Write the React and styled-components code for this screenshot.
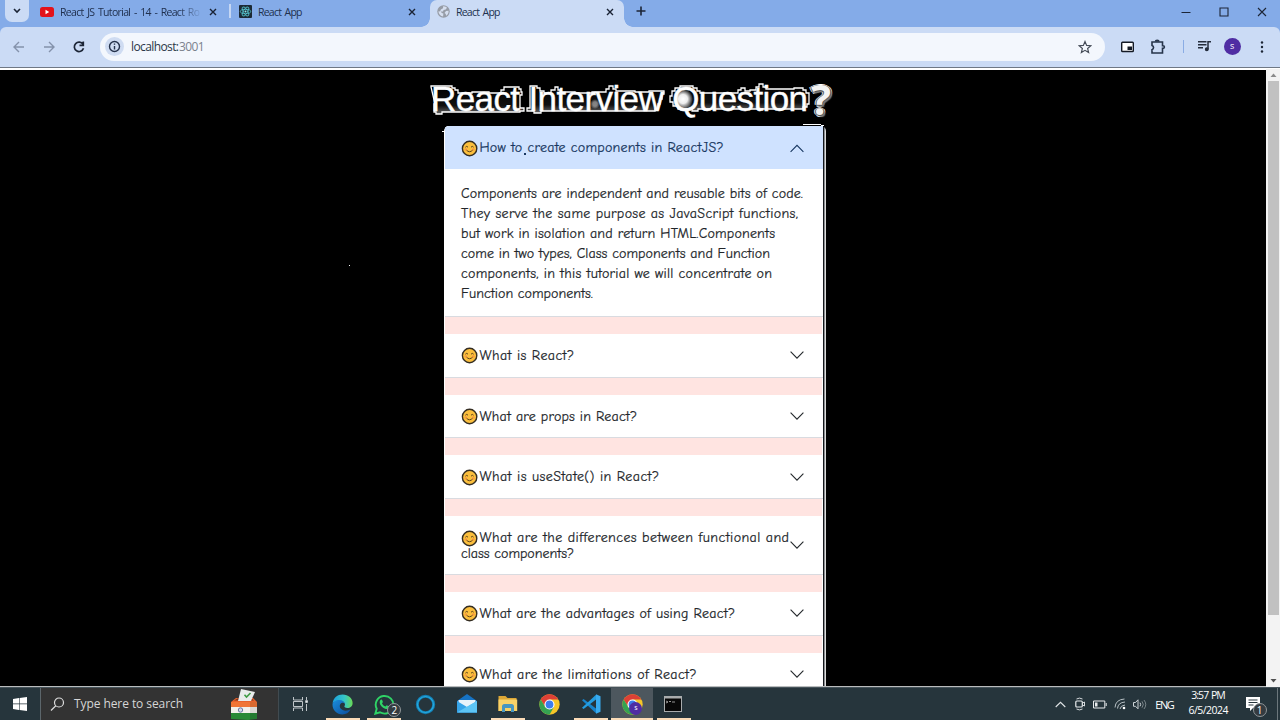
import React, { useLayoutEffect, useRef, useState } from "react";
import styled, { createGlobalStyle } from "styled-components";

const GlobalStyle = createGlobalStyle`
  * { box-sizing: border-box; }
  html, body { margin: 0; padding: 0; overflow: hidden; background: #000; }
  body { font-family: "Segoe UI", "Open Sans", sans-serif; }
  svg { display: block; flex: none; }
`;

/* Text run whose tracking is adjusted so that it spans a given width. */
const Run = styled.span`
  display: inline-block;
  white-space: pre;
  vertical-align: top;
`;
function Fit({ w, children }) {
  const ref = useRef(null);
  const [tracking, setTracking] = useState(0);
  useLayoutEffect(() => {
    const natural = ref.current.getBoundingClientRect().width;
    setTracking((w - natural) / (children.length - 1));
  }, []);
  return <Run ref={ref} style={{ letterSpacing: `${tracking}px`, marginRight: `${-tracking}px` }}>{children}</Run>;
}

const Screen = styled.div`
  width: 1280px;
  height: 720px;
  display: flex;
  flex-direction: column;
  overflow: hidden;
  background: #000;
`;

/* ---------- browser chrome ---------- */
const TabStrip = styled.div`
  height: 27px;
  display: flex;
  align-items: flex-start;
  background: #84abe8;
  padding-left: 5px;
`;
const TabSearch = styled.div`
  width: 24px;
  height: 22px;
  border-radius: 0 0 7px 7px;
  background: #cbdbf5;
  display: grid;
  place-items: center;
  margin-right: 4px;
`;
const Tab = styled.div`
  position: relative;
  width: ${(p) => p.$w}px;
  height: 27px;
  padding: 0 ${(p) => p.$right}px 4px 7px;
  display: flex;
  align-items: center;
  gap: 6px;
  font-size: 10.5px;
  word-spacing: 1.5px;
  line-height: 16px;
  color: #20304e;
  background: ${(p) => (p.$active ? "#cbdbf5" : "transparent")};
  border-radius: 7px 7px 0 0;
  &::before, &::after {
    content: "";
    display: ${(p) => (p.$active ? "block" : "none")};
    position: absolute;
    bottom: 0;
    width: 9px;
    height: 9px;
  }
  &::before { left: -9px; background: radial-gradient(circle at 0 0, transparent 8.5px, #cbdbf5 9px); }
  &::after { right: -9px; background: radial-gradient(circle at 100% 0, transparent 8.5px, #cbdbf5 9px); }
`;
const TabTitle = styled.div`
  flex: 1;
  overflow: hidden;
  height: 16px;
  mask-image: ${(p) => (p.$fade ? "linear-gradient(90deg, #000 118px, rgba(0,0,0,.15) 139px, transparent 140px)" : "none")};
`;
const Divider = styled.div`
  width: ${(p) => p.$w || 1}px;
  height: ${(p) => p.$h}px;
  background: ${(p) => p.$c};
  margin: ${(p) => p.$m || 0};
`;
const NewTab = styled.div`
  width: 34px;
  height: 22px;
  display: grid;
  place-items: center;
`;
const WindowButtons = styled.div`
  margin-left: auto;
  display: flex;
  height: 23px;
  align-items: center;
  gap: 28px;
  padding-right: 13.5px;
`;
const Toolbar = styled.div`
  height: 40px;
  background: #cbdbf5;
  border-radius: 6px 6px 0 0;
  display: flex;
  align-items: center;
  padding: 0 11px 1px 11px;
`;
const ToolbarBack = styled.div`
  background: linear-gradient(#84abe8 50%, #cbdbf5 50%);
`;
const NavButtons = styled.div`
  display: flex;
  gap: 14px;
  width: 89px;
`;
const AddressBar = styled.div`
  width: 1005px;
  height: 28px;
  border-radius: 14px;
  background: #f3f7fd;
  display: flex;
  align-items: center;
  padding: 0 13px 0 5px;
  font-size: 12px;
  line-height: 18px;
  color: #2b3748;
  i { font-style: normal; color: #7b828d; }
`;
const SiteInfo = styled.div`
  width: 19px;
  height: 19px;
  border-radius: 50%;
  background: #cfdcf2;
  display: grid;
  place-items: center;
  margin-right: 7px;
`;
const Actions = styled.div`
  flex: 1;
  display: flex;
  align-items: center;
  justify-content: space-between;
  padding-left: 16px;
  padding-right: 2px;
`;
const Avatar = styled.div`
  width: 17px;
  height: 17px;
  border-radius: 50%;
  background: #4f2da3;
  color: #fff;
  font: 9px/16px "Open Sans", sans-serif;
  text-align: center;
  margin-left: -5px;
`;
const PageEdge = styled.div`
  height: 3px;
  background: linear-gradient(#6f7885 0 1px, #fff 1px 3px);
`;

/* ---------- page ---------- */
const Viewport = styled.div`
  height: 617px;
  display: flex;
  background: #000;
`;
const Page = styled.div`
  position: relative;
  flex: 1;
  overflow: hidden;
  padding-left: 431px;
`;
const Heading = styled.h1`
  position: relative;
  margin: 0;
  height: 56px;
  padding-top: 8px;
  display: flex;
  font: 400 35px/42px Arial, "Liberation Sans", sans-serif;
  color: #fff;
`;
const HeadingGlow = styled.svg`
  position: absolute;
  left: -5px;
  top: 10px;
`;
const HeadingText = styled.div`
  position: relative;
  width: 378px;
  -webkit-text-stroke: 0.4px #fff;
`;
const Mark = styled.div`
  position: relative;
  width: 24px;
  margin-top: -2px;
  text-align: center;
  font: 700 42px/46px "Open Sans", sans-serif;
  color: #f3f3f3;
  text-shadow: 1px 0 #555, -1px 0 #555, 0 1px #555, 2px 2px 1px #777, 2px 0 #ddd, -2px 0 #ddd, 0 2px #fff, 0 -1px #fff;
`;
const Speck = styled.div`
  position: absolute;
  left: ${(p) => p.$x}px;
  top: ${(p) => p.$y}px;
  width: ${(p) => p.$w || 1}px;
  height: ${(p) => p.$h || 1}px;
  background: ${(p) => p.$c || "#fff"};
`;
const Accordion = styled.div`
  position: relative;
  margin-left: 13px;
  width: 382px;
  height: 561px;
  padding-left: 1px;
  background: linear-gradient(90deg, #fff 0 379px, #15181c 379px 380px, #8c8f92 380px 381px, #dcdcdc 381px);
  border-radius: 5px 5px 0 0;
  overflow: hidden;
  font-family: "Comic Sans MS", "Comic Neue", "Open Sans", sans-serif;
  font-size: 14px;
  -webkit-text-stroke: 0.2px currentColor;
  color: #212529;
`;
const Item = styled.section`
  width: 378px;
  background: #fff;
  border-bottom: 1px solid #d9dbe0;
`;
const Gap = styled.div`
  width: 377px;
  height: 17px;
  background: #ffe4e1;
`;
const Question = styled.button`
  width: 100%;
  height: ${(p) => p.$h}px;
  border: 0;
  padding: ${(p) => (p.$tall ? 0 : 1)}px 19px 0 16px;
  display: flex;
  align-items: center;
  justify-content: space-between;
  text-align: left;
  font: inherit;
  line-height: 16px;
  color: ${(p) => (p.$open ? "#173660" : "#212529")};
  background: ${(p) => (p.$open ? "#cfe2ff" : "#fff")};
`;
const Label = styled.div`
  flex: 1;
  white-space: nowrap;
  margin-top: ${(p) => (p.$tall ? 2 : 0)}px;
  width: 0;
`;
const Line = styled.div`
  display: flex;
  align-items: center;
  gap: 1.5px;
  height: ${(p) => p.$h}px;
  line-height: ${(p) => p.$h}px;
`;
const Answer = styled.div`
  height: 147px;
  padding: 15px 16px 0;
`;
const ScrollBar = styled.div`
  width: 14px;
  margin-top: -1px;
  background: #f3f3f3;
  display: flex;
  flex-direction: column;
  align-items: center;
  justify-content: space-between;
  padding: 1px 1px 3px 2px;
`;
const Thumb = styled.div`
  width: 11px;
  height: 534px;
  background: #c1c1c1;
  margin-bottom: 61px;
`;

/* ---------- taskbar ---------- */
const Taskbar = styled.div`
  height: 33px;
  display: flex;
  background: #26353c;
  border-top: 1px solid #46535a;
  color: #fff;
`;
const Cell = styled.div`
  position: relative;
  width: ${(p) => p.$w || 41.35}px;
  height: 32px;
  display: grid;
  place-items: center;
  background: ${(p) => (p.$on ? "#4d575e" : "transparent")};
  &::after {
    content: "";
    display: ${(p) => (p.$bar ? "block" : "none")};
    position: absolute;
    bottom: 0;
    left: ${(p) => (p.$on ? 0 : 4)}px;
    right: ${(p) => (p.$on ? 0 : 3.5)}px;
    height: 2px;
    background: #fbdcb8;
  }
`;
const Search = styled.div`
  width: 239px;
  height: 32px;
  background: #333;
  border-left: 1px solid #5c666b;
  border-right: 1px solid #414b50;
  display: flex;
  align-items: center;
  gap: 9px;
  padding: 0 20px 0 9px;
  font-size: 12px;
  line-height: 18px;
  color: #d6d6d6;
  svg:last-child { margin-left: auto; }
`;
const Badge = styled.div`
  position: absolute;
  left: ${(p) => p.$x}px;
  top: ${(p) => p.$y}px;
  width: 14px;
  height: 14px;
  border-radius: 50%;
  border: 1px solid #909699;
  background: #343b40;
  font: 10px/12px "Open Sans", sans-serif;
  color: #fff;
  text-align: center;
`;
const Tray = styled.div`
  margin-left: auto;
  display: flex;
  align-items: center;
  font-size: 11px;
`;
const Clock = styled.div`
  width: 58px;
  display: flex;
  flex-direction: column;
  align-items: center;
  font-size: 10.5px;
  word-spacing: 1px;
  line-height: 15px;
  margin: 0 0 2px -0.5px;
`;
const ShowDesktop = styled.div`
  width: 3px;
  height: 32px;
  margin-left: 8.5px;
  border-left: 1px solid #6c777c;
`;

/* ---------- icons ---------- */
const Stroke = ({ w, h = w, d, c = "#1c2536", sw = 1.4 }) => (
  <svg width={w} height={h} viewBox={`0 0 ${w} ${h}`} fill="none" stroke={c} strokeWidth={sw}>
    <path d={d} />
  </svg>
);
const Close = () => <Stroke w={8} d="M1 1l6 6M7 1L1 7" c="#192234" />;
const YouTube = () => (
  <svg width="14" height="14" viewBox="0 0 14 14">
    <rect y="2" width="14" height="10" rx="2.5" fill="#e3121b" />
    <path d="M5.5 4.8v4.4L9.2 7z" fill="#fff" />
  </svg>
);
const ReactIcon = () => (
  <svg width="13" height="13" viewBox="0 0 13 13">
    <rect width="13" height="13" rx="1" fill="#1c2a35" />
    <g fill="none" stroke="#53c5cf" strokeWidth=".8">
      {[0, 60, 120].map((a) => (
        <ellipse key={a} cx="6.5" cy="6.5" rx="5.2" ry="2.1" transform={`rotate(${a} 6.5 6.5)`} />
      ))}
    </g>
    <circle cx="6.5" cy="6.5" r="1" fill="#8fe6ea" />
  </svg>
);
const Globe = () => (
  <svg width="13" height="13" viewBox="0 0 13 13">
    <circle cx="6.5" cy="6.5" r="6.2" fill="#969ca6" />
    <path d="M6.2 1.2C8 1 9.2 1.8 10 2.7L8.7 4.5 6.6 4.9 6 6.4H3.8l1 1.6 1.6.6-.3 2.9C3.5 11 1.6 9.2 1.4 6.2l1.7.2.8-1.8L6 3.3zM9 6.1l2.6-.3c.2 2.3-.9 4.1-2.6 5l-.2-1.7-1.3-1z" fill="#d6dfef" />
  </svg>
);
const Smile = () => (
  <svg width="17" height="17" viewBox="0 0 17 17">
    <circle cx="8.6" cy="8.5" r="7.2" fill="#fbbf3d" stroke="#342d22" strokeWidth="1.4" />
    <path d="M4.4 7.2q1.3-1.7 2.6 0M10 7.2q1.3-1.7 2.6 0M5.3 9.9q3.2 3.7 6.5 0" fill="none" stroke="#5e431c" strokeWidth="1" />
    <circle cx="4.8" cy="9.4" r="1.2" fill="#f68b44" opacity=".75" />
    <circle cx="12.4" cy="9.4" r="1.2" fill="#f68b44" opacity=".75" />
  </svg>
);
const Chevron = ({ up }) => (
  <Stroke w={14} h={9} sw={1.1} c={up ? "#173660" : "#24282c"} d={up ? "M.6 7.800L7 1.300l6.400 6.500" : "M.6 .7L7 7.200l6.400-6.500"} />
);
const WindowsLogo = () => (
  <svg width="14" height="14" viewBox="0 0 14 14" fill="#fff">
    <path d="M0 2l6-.9v5.5H0zM6.600 1L14 0v6.600H6.600zM0 7.300h6v5.600L0 12zM6.600 7.300H14V14l-7.400-1z" />
  </svg>
);
const BallotBox = () => (
  <svg width="28" height="31" viewBox="0 0 28 31">
    <path d="M1 13l5-4h17l4 4v4H1z" fill="#e8632d" />
    <path d="M4 11.5l4-2.3h13l3 2.3z" fill="#7b3117" />
    <path d="M11 0l14 3-4 9H8z" fill="#e8ecec" />
    <path d="M14.5 5.8l2 2.2 4-4" fill="none" stroke="#3e9c46" strokeWidth="1.6" />
    <path d="M1 13h26v5H1z" fill="#f07536" />
    <path d="M1 18h26v6H1z" fill="#f2f1ec" />
    <path d="M1 24h26v6l-9 1-17-1z" fill="#298a37" />
    <circle cx="10.5" cy="21" r="2.2" fill="#d3d9e8" stroke="#4c5c91" strokeWidth=".8" />
    <path d="M20 13l7 0v17l-7 1z" fill="#000" opacity=".1" />
  </svg>
);
const TaskView = () => (
  <svg width="15" height="14" viewBox="0 0 15 14" fill="none" stroke="#d9dde0">
    <path d="M.5 0v3h9V0M.5 14v-3h9v3M.5 4.5v5h9v-5zM13.5 0v3M13.5 7v7" opacity=".85" />
    <rect x="12.8" y="3.8" width="1.5" height="1.5" fill="#fff" />
  </svg>
);
const Edge = () => (
  <svg width="21" height="21" viewBox="0 0 21 21">
    <defs>
      <linearGradient id="edgeTop" x1="0" x2="1"><stop stopColor="#1ba0df" /><stop offset=".6" stopColor="#36c6c6" /><stop offset="1" stopColor="#6adb54" /></linearGradient>
      <linearGradient id="edgeLow" x2="1" y2="1"><stop stopColor="#1b8ddd" /><stop offset="1" stopColor="#0b4d9b" /></linearGradient>
    </defs>
    <path d="M.6 9C1.4 3.8 5.5.5 10.6.5c5.8 0 10 4 10 8.4 0 3.2-2.3 5-5.1 5-2.5 0-3.6-1-3-1.9C14 9.8 12 7 8.5 7 5 7 1.8 8 .6 9z" fill="url(#edgeTop)" />
    <path d="M.5 10C1 7.5 4 5.7 7.5 5.9c3 .1 5.1 1.8 5.4 4-1-1.4-3.4-1.5-4.5.2-2 3 1 6.6 5.2 6.6 2 0 3.8-.7 5-1.4C17 18.700 14 20.500 10.500 20.500 5 20.500.2 16 .5 10z" fill="url(#edgeLow)" />
  </svg>
);
const WhatsApp = () => (
  <svg width="21" height="21" viewBox="0 0 21 21">
    <path d="M1.3 19.700l1.400-4.900A8.800 8.800 0 1 1 6 18.300z" fill="none" stroke="#2fd366" strokeWidth="1.900" />
    <path d="M7.300 5.600c.9-.3 1.300 1.700 1.600 2.400L8 9.400c.8 1.500 2 2.500 3.500 3.100l1.200-1.300 2.500 1.200c.2 2-1.800 2.900-3.300 2.500C8.500 14 6 11.300 5.700 8.700c-.1-1.500.7-2.900 1.600-3.100z" fill="#2fd366" />
  </svg>
);
const Cortana = () => (
  <svg width="21" height="21" viewBox="0 0 21 21" fill="none">
    <circle cx="10.5" cy="10.5" r="8.200" stroke="#127fb5" strokeWidth="3" />
    <circle cx="10.5" cy="10.5" r="8" stroke="#27a9dc" strokeWidth="1.200" />
  </svg>
);
const Mail = () => (
  <svg width="20" height="20" viewBox="0 0 20 20">
    <path d="M0 7l10-7 10 7v11.500H0z" fill="#1673c4" />
    <path d="M1.500 6h17v8h-17z" fill="#e8f3fa" />
    <path d="M0 7l10 6 10-6v11.500H0z" fill="#36a4e8" />
    <path d="M0 18.500l12-7L20 7v11.500z" fill="#5dc5f5" />
  </svg>
);
const Folder = () => (
  <svg width="20" height="18" viewBox="0 0 20 18">
    <path d="M.5 1h7l2 2h9v13H.5z" fill="#dca736" />
    <path d="M.5 4.500h18.700V16H.5z" fill="#f8d268" />
    <path d="M4 17v-5.500Q4 9 6.500 9h7q2.500 0 2.500 2.500V17h-3v-4H7v4z" fill="#4796c1" />
  </svg>
);
const ChromeLogo = () => (
  <svg width="21" height="21" viewBox="0 0 20 20">
    <circle cx="10" cy="10" r="9.700" fill="#f5c628" />
    <path d="M1.600 5.200A9.700 9.700 0 0 1 18.400 5.200H10L6 12.300z" fill="#dd4036" />
    <path d="M1.600 5.200A9.700 9.700 0 0 0 10 19.700L14.200 12.400 6 12.300z" fill="#35a352" />
    <circle cx="10" cy="10" r="4.800" fill="#fff" />
    <circle cx="10" cy="10" r="3.700" fill="#3b7ded" />
  </svg>
);
const VSCode = () => (
  <svg width="20" height="20" viewBox="0 0 20 20">
    <path d="M1 6.300l1.600-1.200L15 14.500v4.800z" fill="#1784cc" />
    <path d="M1 13.800l1.600 1.300L15 5.500V.7z" fill="#249de0" />
    <path d="M15 .3l4.500 2v15.500l-4.500 2z" fill="#38abef" />
  </svg>
);
const ProfileDot = styled(Avatar)`
  position: absolute;
  left: 18px;
  top: 14px;
  width: 13px;
  height: 13px;
  margin: 0;
  font-size: 7px;
  line-height: 12px;
`;
const Terminal = () => (
  <svg width="18" height="16" viewBox="0 0 18 16">
    <rect width="18" height="16" fill="#a9acad" />
    <rect x="1" y="2.500" width="16" height="12.500" fill="#080808" />
    <path d="M2 5l2 1-2 1M5 5.500h2M8 6h3" fill="none" stroke="#bbb" strokeWidth=".8" />
  </svg>
);

const questions = [
  { lines: [["What is React?", 94.5]] },
  { lines: [["What are props in React?", 157.5]] },
  { lines: [["What is useState() in React?", 179.5]] },
  { lines: [["What are the differences between functional and", 309.5], ["class components?", 113]] },
  { lines: [["What are the advantages of using React?", 255.5]] },
  { lines: [["What are the limitations of React?", 217]] },
];
const answer = [
  ["Components are independent and reusable bits of code.", 342],
  ["They serve the same purpose as JavaScript functions,", 337],
  ["but work in isolation and return HTML.Components", 314],
  ["come in two types, Class components and Function", 309],
  ["components, in this tutorial we will concentrate on", 311],
  ["Function components.", 132],
];

function QuestionRow({ lines, open }) {
  const tall = lines.length > 1;
  return (
    <Question $h={open ? 43 : tall ? 58 : 42.7} $open={open} $tall={tall}>
      <Label $tall={tall}>
        {lines.map(([text, w], i) => (
          <Line key={text} $h={16}>
            {i === 0 && <Smile />}
            <Fit w={w}>{text}</Fit>
          </Line>
        ))}
      </Label>
      <Chevron up={open} />
    </Question>
  );
}

export default function App() {
  return (
    <Screen>
      <GlobalStyle />
      <TabStrip>
        <TabSearch><Stroke w={8} h={6} d="M1 1l3 3 3-3" sw={1.6} /></TabSearch>
        <Tab $w={196} $right={12}>
          <YouTube />
          <TabTitle $fade><Fit w={140}>React JS Tutorial - 14 - React Ro</Fit></TabTitle>
          <Close />
        </Tab>
        <Divider $w={1.5} $h={14} $c="#c5d7f4" $m="4px 1.500px 0 0" />
        <Tab $w={198} $right={14}>
          <ReactIcon />
          <TabTitle><Fit w={44.5}>React App</Fit></TabTitle>
          <Close />
        </Tab>
        <Tab $w={194} $right={10} $active>
          <Globe />
          <TabTitle><Fit w={44.5}>React App</Fit></TabTitle>
          <Close />
        </Tab>
        <NewTab><Stroke w={10} d="M5 .5v9M.5 5h9" sw={1.6} /></NewTab>
        <WindowButtons>
          <Stroke w={10} d="M.5 5.500h9" sw={1} />
          <Stroke w={10} d="M1 1h8v8H1z" sw={1.1} />
          <Stroke w={10} d="M1 1l8 8M9 1L1 9" sw={1.1} />
        </WindowButtons>
      </TabStrip>
      <ToolbarBack>
        <Toolbar>
          <NavButtons>
            <Stroke w={16} d="M13 8H3M8 3L3 8l5 5" c="#8492ab" />
            <Stroke w={16} d="M3 8h10M8 3l5 5-5 5" c="#8492ab" />
            <Stroke w={16} d="M12 5.300A4.700 4.700 0 1 0 12.500 9.300M12.300 2.500v3.800H8.500" sw={1.7} />
          </NavButtons>
          <AddressBar>
            <SiteInfo>
              <svg width="13" height="13" viewBox="0 0 13 13" fill="none" stroke="#25324b" strokeWidth="1.400">
                <circle cx="6.500" cy="6.500" r="5" /><path d="M6.500 3.500v1.300M6.500 5.900v3.600" />
              </svg>
            </SiteInfo>
            <Fit w={48}>localhost:</Fit><i><Fit w={25.5}>3001</Fit></i>
            <svg width="14" height="14" viewBox="0 0 24 24" fill="none" stroke="#454c58" strokeWidth="2" style={{ marginLeft: "auto" }}>
              <path d="M12 2.500l2.800 6.700 7.200.6-5.500 4.700 1.700 7L12 17.700l-6.200 3.800 1.700-7L2 9.800l7.200-.6z" />
            </svg>
          </AddressBar>
          <Actions>
            <svg width="13" height="12" viewBox="0 0 13 12"><rect x=".7" y="1.200" width="11.600" height="9.300" rx=".8" fill="#fff" stroke="#141a25" strokeWidth="1.400" /><path d="M6.500 5.500H11v3.500H6.500z" fill="#141a25" /></svg>
            <svg width="16" height="16" viewBox="0 0 16 16" fill="none" stroke="#26344a" strokeWidth="1.600">
              <path d="M2 3h10.500v3.800h.6a1.300 1.300 0 0 1 0 2.600h-.6V14H2v-3.300a2.200 2.200 0 0 0 0-4.200z" />
              <path d="M5.500 2.500a1.700 1.300 0 0 1 3.400 0" fill="#26344a" />
            </svg>
            <Divider $h={13} $c="#8aace4" />
            <svg width="15" height="13" viewBox="0 0 15 13" fill="none" stroke="#242d3d" strokeWidth="1.500" style={{ marginLeft: "-3px" }}>
              <path d="M1 1.800h8.500M1 4.800h8.500M1 7.800h5M11 9V1.800h3" /><circle cx="9.800" cy="9.300" r="1.500" fill="#242d3d" stroke="none" /><circle cx="9.800" cy="9.300" r="1.200" />
            </svg>
            <Avatar>s</Avatar>
            <svg width="10" height="12" viewBox="0 0 10 12" fill="#1b2434"><circle cx="5" cy="1.500" r="1.200" /><circle cx="5" cy="6" r="1.200" /><circle cx="5" cy="10.500" r="1.200" /></svg>
          </Actions>
        </Toolbar>
      </ToolbarBack>
      <PageEdge />

      <Viewport>
        <Page>
          <Heading>
            <HeadingGlow width="410" height="40" viewBox="426 80 410 40" stroke="#fff" strokeWidth="1.300">
              <defs>
                <linearGradient id="shade" x2="0" y2="1"><stop stopColor="#000" /><stop offset=".7" stopColor="#101010" /><stop offset="1" stopColor="#6a6a6a" /></linearGradient>
                <radialGradient id="spot"><stop stopColor="#fff" /><stop offset=".45" stopColor="#eee" /><stop offset="1" stopColor="#fff" stopOpacity="0" /></radialGradient>
              </defs>
              <g fill="url(#shade)">
                <path d="M431 87v-1h21v2h3v2h3v3h14v-1h17v1h12v-3h3v-3h15v2h2v3h1v3h-2v13h4v3h-4v1h-78v2h-6v-2h-2v-8h1z" />
                <path d="M530 86h7v2h3v3h4v2h7v-3h4v-3h3v3h3v2h14v1h17v-1h14v-3h3v-3h4v3h3v2h19v1h14v-1h15v3h-2v5h-2v5h-2v5h-3v2H541v2h-7v-2h-7v-3h3z" />
                <path d="M670 96h2v-5h3v-3h5v-2h13v2h4v3h3v2h38v-3h3v-2h4v3h5v-1h6v-3h3v-3h4v3h3v2h28v-1h9v2h3v3h3v11h-2v3h-4v2H698v2h-6v-2h-14v-3h-5v-4h-3z" />
              </g>
              <circle cx="683" cy="99" r="10" fill="url(#spot)" stroke="none" />
              <circle cx="595" cy="104" r="5" fill="url(#spot)" stroke="none" opacity=".5" />
            </HeadingGlow>
            <HeadingText><Fit w={377}>React Interview Question</Fit></HeadingText>
            <Mark>?</Mark>
          </Heading>
          <Accordion>
            <Item>
              <QuestionRow open lines={[["How to create components in ReactJS?", 244]]} />
              <Answer>
                {answer.map(([text, w]) => <Line key={text} $h={20}><Fit w={w}>{text}</Fit></Line>)}
              </Answer>
            </Item>
            {questions.map((q, i) => (
              <React.Fragment key={i}>
                <Gap />
                <Item><QuestionRow lines={q.lines} /></Item>
              </React.Fragment>
            ))}
          </Accordion>
          <Speck $x={349} $y={195} />
          <Speck $x={442} $y={61} $w={2} />
          <Speck $x={803} $y={54} $w={18} />
          <Speck $x={821} $y={55} $w={3} />
          <Speck $x={524} $y={83} $w={2} $h={2} $c="#173660" />
          <Speck $x={0} $y={616} $w={1266} $c="#b9bcbd" />
        </Page>
        <ScrollBar>
          <svg width="7" height="9" viewBox="0 0 7 9"><path d="M.5 7L3.500 3.500l3 3.500z" fill="#8b8b8b" /></svg>
          <Thumb />
          <svg width="7" height="6" viewBox="0 0 7 6"><path d="M.5 1L3.500 4.500l3-3.500z" fill="#505050" /></svg>
        </ScrollBar>
      </Viewport>

      <Taskbar>
        <Cell $w={40}><WindowsLogo /></Cell>
        <Search>
          <svg width="15" height="15" viewBox="0 0 15 15" fill="none" stroke="#ddd" strokeWidth="1.200"><circle cx="9" cy="5.500" r="4.500" /><path d="M5.800 8.800L1 13.500" /></svg>
          <Fit w={109}>Type here to search</Fit>
          <BallotBox />
        </Search>
        <Cell $w={43}><TaskView /></Cell>
        <Cell $bar><Edge /></Cell>
        <Cell $bar><WhatsApp /><Badge $x={24} $y={15}>2</Badge></Cell>
        <Cell><Cortana /></Cell>
        <Cell><Mail /></Cell>
        <Cell $bar><Folder /></Cell>
        <Cell><ChromeLogo /></Cell>
        <Cell $bar><VSCode /></Cell>
        <Cell $bar $on><ChromeLogo /><ProfileDot>s</ProfileDot></Cell>
        <Cell $bar><Terminal /></Cell>
        <Tray>
          <Cell $w={20}><Stroke w={11} h={7} d="M.7 6l4.800-4.700L10.300 6" c="#e1e5e7" sw={1.1} /></Cell>
          <Cell $w={20}>
            <svg width="12" height="14" viewBox="0 0 12 14" fill="none" stroke="#e8ebed" strokeWidth="1.200"><rect x="1.800" y="4" width="6.500" height="6" rx="1" /><path d="M8.500 6l2-1v4l-2-1M2.500 2q3-1.800 6 0M2.500 12q3 1.800 6 0" strokeWidth=".9" /></svg>
          </Cell>
          <Cell $w={20}>
            <svg width="14" height="9" viewBox="0 0 14 9" fill="none" stroke="#e8ebed"><path d="M.5 1h11.300v7H.5zM13.200 3v3" /><path d="M2 2.500h2.500v4H2z" fill="#e8ebed" stroke="none" /></svg>
          </Cell>
          <Cell $w={20}>
            <svg width="13" height="12" viewBox="0 0 13 12" fill="none" stroke="#b7c0c4"><path d="M1 9.500Q1.500 1.500 10.500 1M3.500 10.500Q4 4.500 11 4M6 11Q6.500 7.500 11 7" /><circle cx="10" cy="10" r="1.300" fill="#fff" stroke="none" /></svg>
          </Cell>
          <Cell $w={20}>
            <svg width="14" height="11" viewBox="0 0 14 11" fill="none" stroke="#cdd3d6"><path d="M.5 3.500h2l2.500-2.700v9L2.500 7.300h-2zM7 3.700q1.300 1.800 0 3.600" /><path d="M9 2.300q2.500 3.200 0 6.400M11 1q3.500 4.500 0 9" opacity=".5" /></svg>
          </Cell>
          <Cell $w={30}><Fit w={19.5}>ENG</Fit></Cell>
          <Clock><Fit w={34.5}>3:57 PM</Fit><Fit w={40}>6/5/2024</Fit></Clock>
          <Cell $w={31}>
            <svg width="14" height="14" viewBox="0 0 14 14"><path d="M0 0h14v11H7l-3 3v-3H0z" fill="#fff" /><path d="M2.500 3h9M2.500 5.500h9M2.500 8h5" stroke="#26353c" /></svg>
            <Badge $x={15} $y={15}>1</Badge>
          </Cell>
          <ShowDesktop />
        </Tray>
      </Taskbar>
    </Screen>
  );
}
